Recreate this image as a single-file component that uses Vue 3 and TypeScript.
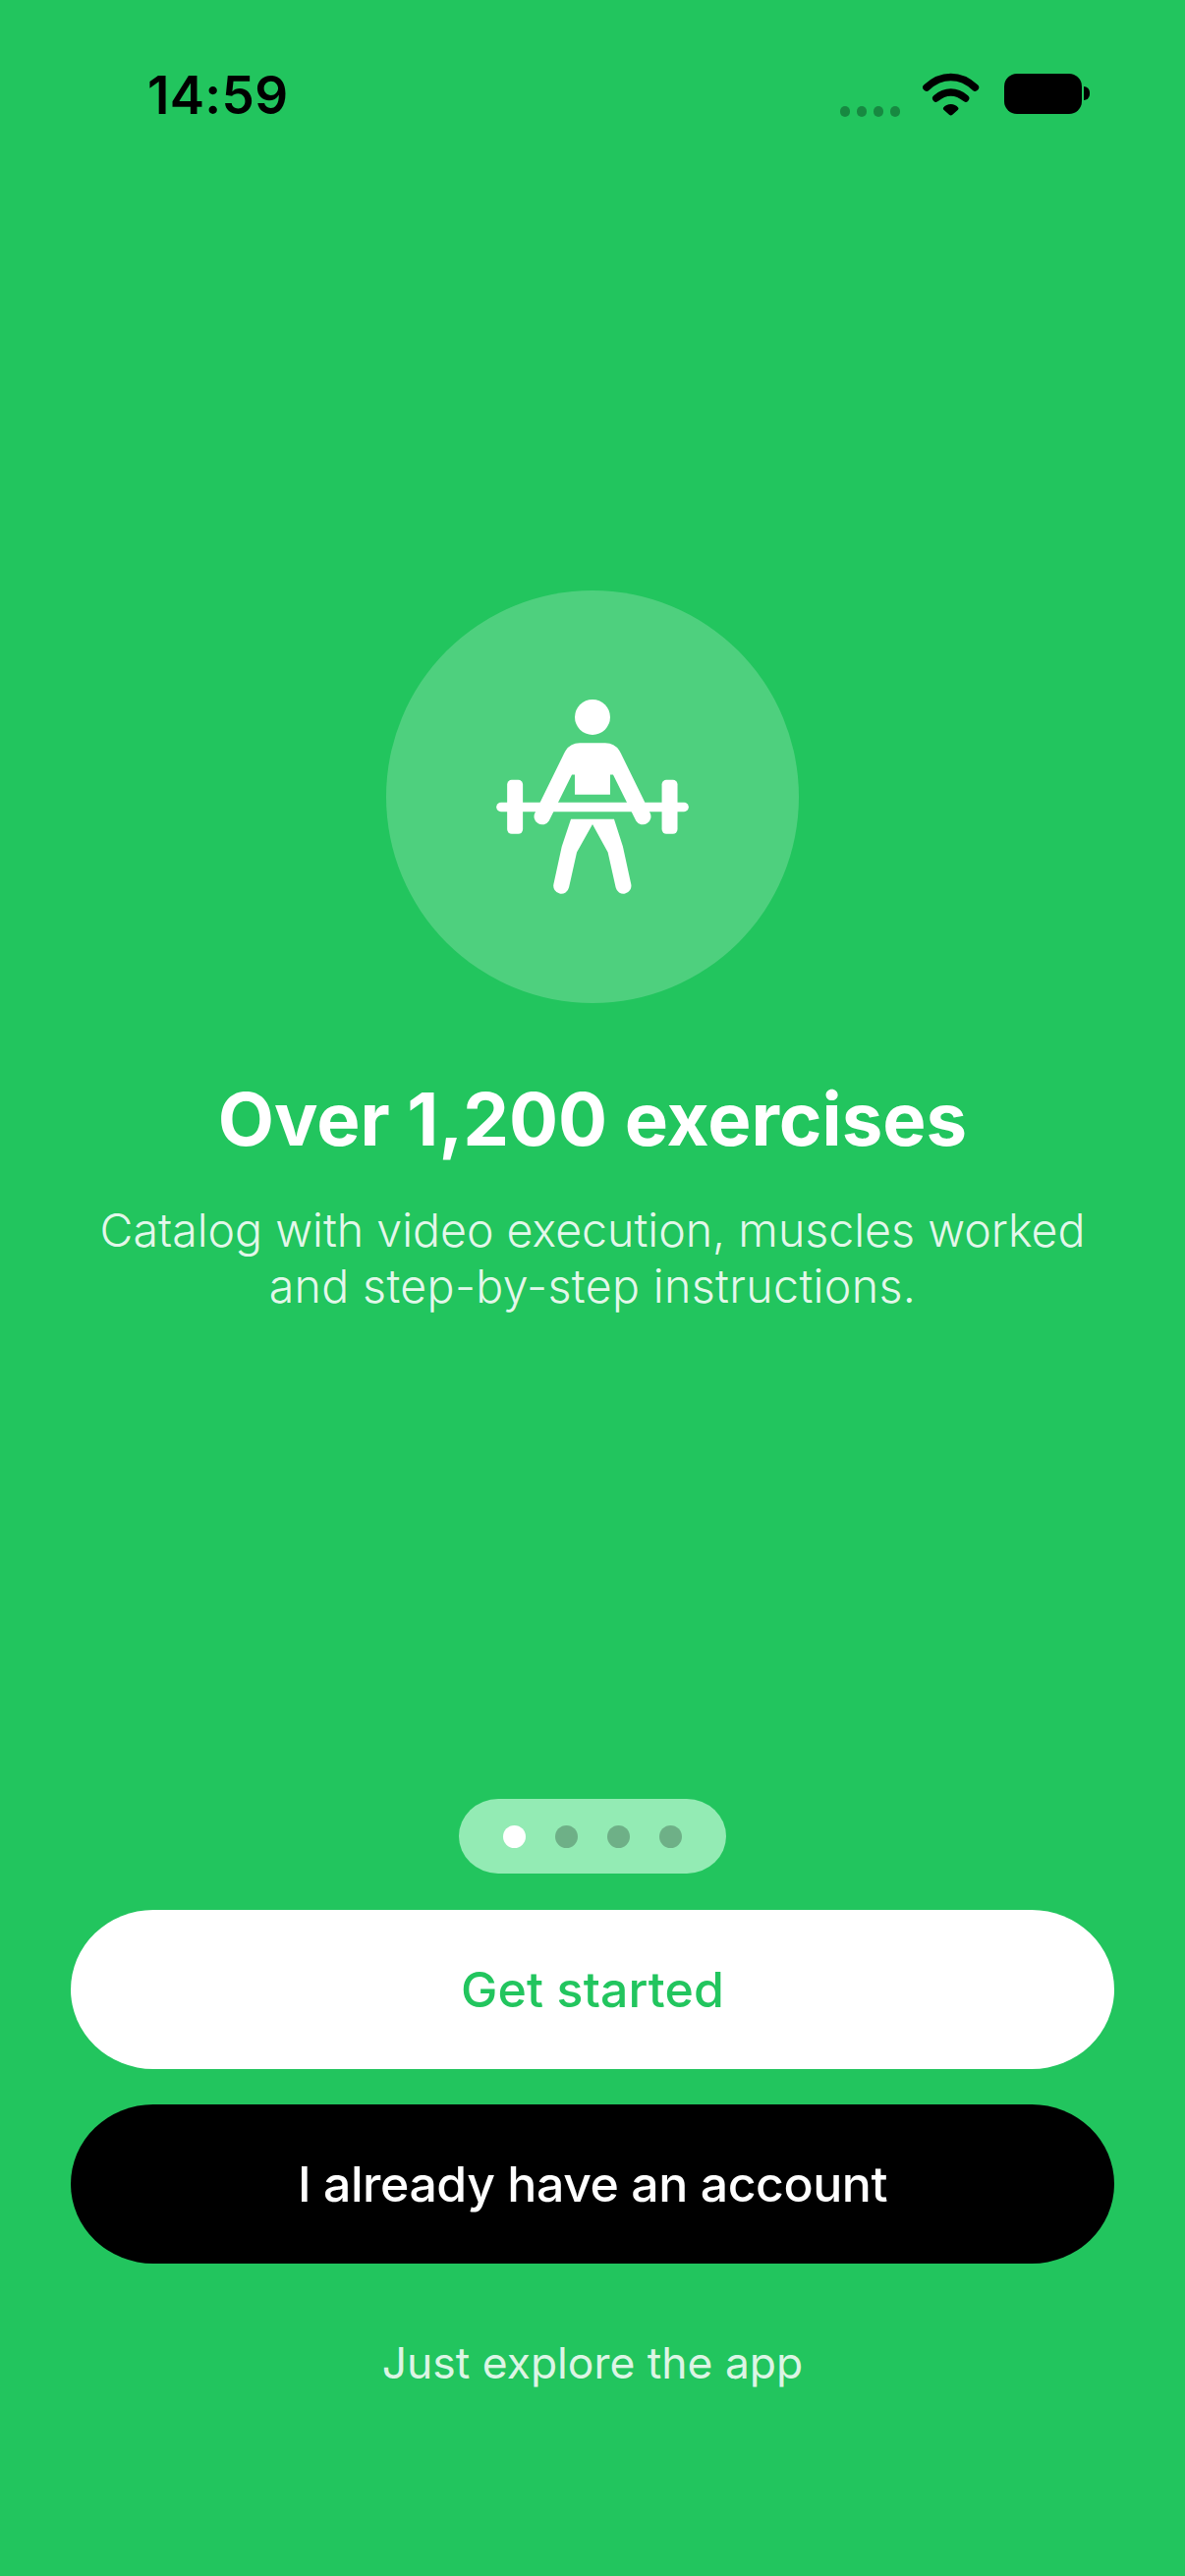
<script setup lang="ts">
const dots: number[] = [0, 1, 2, 3]
</script>

<template>
  <div class="screen">
    <header class="status">
      <span class="time">14:59</span>
      <div class="indicators">
        <div class="signal">
          <i v-for="d in dots" :key="d"></i>
        </div>
        <svg class="wifi" viewBox="325 75 180 135" aria-hidden="true">
          <path d="M340 120C385 78 443 78 488 120" fill="none" stroke="#000" stroke-width="23" stroke-linecap="round" />
          <path d="M369 153C397 129 431 129 459 153" fill="none" stroke="#000" stroke-width="22" stroke-linecap="round" />
          <path d="M391 182C402 167 426 167 437 182C438 185 437 187 435 189L419 203C416 206 412 206 409 203L393 189C391 187 390 185 391 182Z" fill="#000" />
        </svg>
        <div class="battery"><span class="nub"></span></div>
      </div>
    </header>

    <main class="hero">
      <div class="badge">
        <svg class="lifter" viewBox="105 95 588 595" aria-hidden="true">
          <circle cx="399" cy="149" r="54" />
          <rect x="105" y="410" width="588" height="28" rx="14" />
          <rect x="138" y="341" width="48" height="165" rx="14" />
          <rect x="611" y="341" width="48" height="165" rx="14" />
          <path d="M360 228H438Q470 228 485 258L574 440A24 24 0 0 1 532 466L462 325H453V386H345V325H336L266 466A24 24 0 0 1 224 440L313 258Q328 228 360 228Z" />
          <path d="M333 461H465L492 545L517 660A24 24 0 0 1 470 670L446 562L399 477L351 562L327 670A24 24 0 0 1 280 660L305 545Z" />
        </svg>
      </div>
      <h1 class="title">Over 1,200 exercises</h1>
      <p class="copy">
        <span class="line">Catalog with video execution, muscles worked</span>
        <span class="line wide">and step-by-step instructions.</span>
      </p>
    </main>

    <footer class="actions">
      <div class="pager">
        <i class="active"></i><i></i><i></i><i></i>
      </div>
      <button class="btn light" type="button">Get started</button>
      <button class="btn dark" type="button">I already have an account</button>
      <a class="skip">Just explore the app</a>
    </footer>
  </div>
</template>

<style>
html, body { margin: 0; background: #22c55e; }
</style>

<style scoped>
.screen {
  width: 1206px;
  height: 2622px;
  background: #22c55e;
  display: flex;
  flex-direction: column;
  font-family: Inter, "Liberation Sans", sans-serif;
  overflow: hidden;
}
.status {
  height: 140px;
  box-sizing: border-box;
  display: flex;
  justify-content: space-between;
  align-items: flex-start;
  padding: 67px 105px 0 150px;
}
.time {
  font-size: 53px;
  line-height: 60px;
  font-weight: 600;
  letter-spacing: 0.3px;
  color: #000;
}
.indicators {
  display: flex;
  align-items: flex-start;
  padding-top: 8px;
}
.signal {
  display: flex;
  gap: 6.5px;
  margin-top: 33px;
  margin-right: 22px;
}
.signal i {
  width: 10.5px;
  height: 10.5px;
  border-radius: 50%;
  background: rgba(0, 0, 0, 0.3);
}
.wifi {
  width: 60px;
  height: 45px;
  margin-top: -1px;
  margin-right: 24px;
}
.battery {
  position: relative;
  width: 79px;
  height: 41px;
  border-radius: 13px;
  background: #000;
}
.nub {
  position: absolute;
  left: 81px;
  top: 13px;
  width: 6px;
  height: 14px;
  border-radius: 0 7px 7px 0;
  background: #000;
}
.hero {
  display: flex;
  flex-direction: column;
  align-items: center;
  padding-top: 461px;
}
.badge {
  width: 420px;
  height: 420px;
  border-radius: 50%;
  background: rgba(255, 255, 255, 0.2);
  display: flex;
  align-items: center;
  justify-content: center;
}
.lifter {
  width: 196px;
  height: 198px;
  fill: #fff;
}
.title {
  margin: 75px 0 0;
  font-size: 74.3px;
  line-height: 86px;
  font-weight: 700;
  color: #fff;
  text-align: center;
}
.copy {
  margin: 42px 0 0;
  font-size: 46.5px;
  line-height: 57px;
  font-weight: 340;
  color: rgba(255, 255, 255, 0.9);
  text-align: center;
}
.line { display: block; }
.line.wide { letter-spacing: 0.35px; }
.actions {
  margin-top: auto;
  padding: 0 72px 191px;
  display: flex;
  flex-direction: column;
  align-items: center;
}
.pager {
  width: 272px;
  height: 76px;
  box-sizing: border-box;
  padding-left: 45px;
  border-radius: 40px / 38px;
  background: #93ebb4;
  display: flex;
  align-items: center;
  gap: 30px;
  margin-bottom: 37px;
}
.pager i {
  width: 23px;
  height: 23px;
  border-radius: 50%;
  background: rgba(0, 0, 0, 0.25);
}
.pager i.active { background: #fff; }
.btn {
  width: 100%;
  height: 162px;
  border: 0;
  padding: 0;
  border-radius: 84px / 81px;
  font-family: inherit;
  font-size: 50px;
  font-weight: 550;
}
.btn.light { background: #fff; color: #22c55e; letter-spacing: 0.1px; }
.btn.dark { background: #000; color: #fff; margin-top: 36px; letter-spacing: -0.45px; }
.skip {
  margin-top: 75px;
  font-size: 44.4px;
  line-height: 52px;
  color: rgba(255, 255, 255, 0.85);
}
</style>
